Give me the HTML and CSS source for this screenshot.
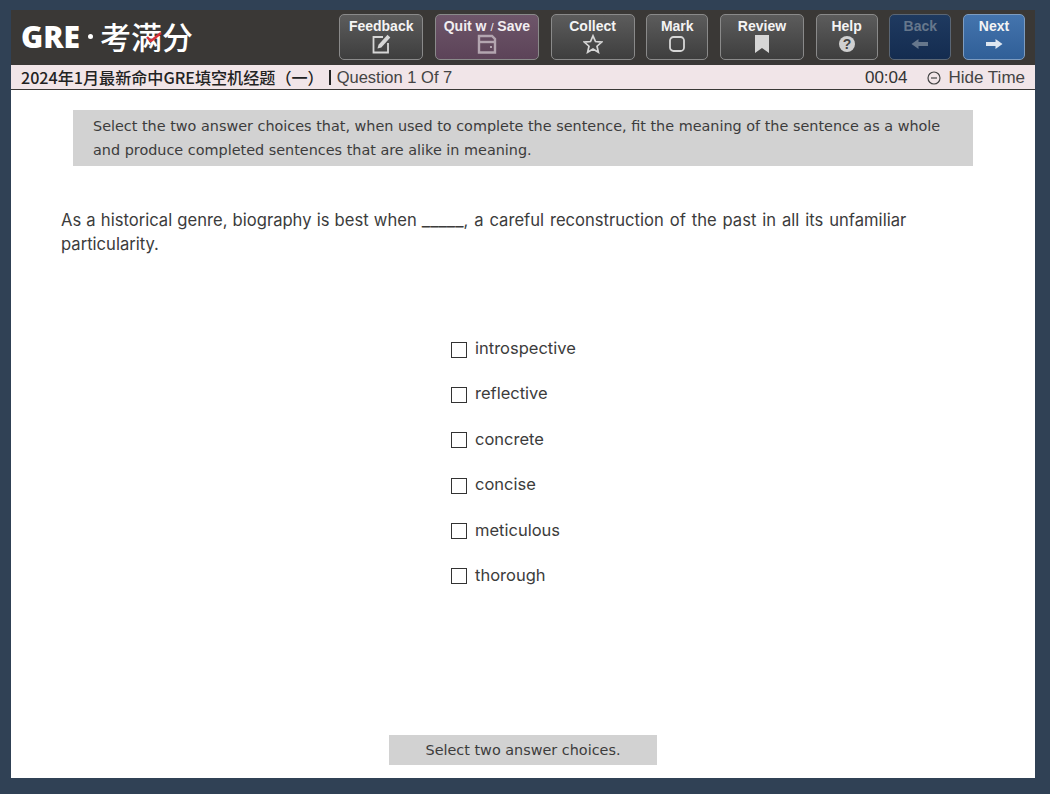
FILE: index.html
```html
<!DOCTYPE html>
<html lang="en">

<head>
  <meta charset="UTF-8">
  <meta name="viewport" content="width=device-width, initial-scale=1.0">
  <title>GRE Question</title>
  <link rel="stylesheet" href="styles.css">
</head>

<body>
  <div id="frame">
    <div id="topbar">
      <div id="logo">
        <span class="logo-gre">GRE</span>
        <span class="logo-dot"></span>
        <span class="logo-cn">考满分<svg class="logo-check" viewBox="0 0 16 10" width="16" height="10"><path d="M1 5l4 4 10-8" fill="none" stroke="#d8303a" stroke-width="2.4"/></svg></span>
      </div>
      <div id="buttons">
        <div class="tool-btn">
          <span>Feedback</span>
          <svg viewBox="0 0 20 20" width="20" height="20"><path d="M12 3H2.500V18.500H17V9" fill="none" stroke="#d6d6d6" stroke-width="1.800"/><path d="M6.500 14.500l1-3.800L16.500.8l2.800 2.800-9 9.900z" fill="#d6d6d6"/></svg>
        </div>
        <div class="tool-btn wide quit">
          <span>Quit w <small>/</small> Save</span>
          <svg viewBox="0 0 20 20" width="20" height="20"><path d="M2 2h13l3 3v13.500H2z" fill="none" stroke="#b3a5b0" stroke-width="2.400"/><path d="M2 8h16" stroke="#b3a5b0" stroke-width="2.400"/><rect x="13" y="12" width="2" height="2" fill="#b3a5b0"/></svg>
        </div>
        <div class="tool-btn">
          <span>Collect</span>
          <svg viewBox="0 0 20 20" width="20" height="20"><path d="M10 1.800l2.500 5.700 6.200.6-4.700 4.100 1.400 6.100-5.400-3.200-5.400 3.200 1.400-6.100L1.300 8.100l6.200-.6z" fill="none" stroke="#d6d6d6" stroke-width="1.700"/></svg>
        </div>
        <div class="tool-btn narrow">
          <span>Mark</span>
          <svg viewBox="0 0 20 20" width="20" height="20"><rect x="3" y="3" width="14" height="14" rx="3.500" fill="none" stroke="#d6d6d6" stroke-width="1.800"/></svg>
        </div>
        <div class="tool-btn">
          <span>Review</span>
          <svg viewBox="0 0 20 20" width="20" height="20"><path d="M3 1h14v18l-7-5-7 5z" fill="#d6d6d6"/></svg>
        </div>
        <div class="tool-btn narrow">
          <span>Help</span>
          <svg viewBox="0 0 20 20" width="20" height="20"><circle cx="10" cy="10" r="8" fill="#d0d0d0"/><text x="10" y="14.500" class="help-mark">?</text></svg>
        </div>
        <div class="tool-btn narrow back">
          <span>Back</span>
          <svg viewBox="0 0 20 20" width="20" height="20"><path d="M1.500 10l7-5v3H18v4H8.500v3z" fill="#66778c"/></svg>
        </div>
        <div class="tool-btn narrow next">
          <span>Next</span>
          <svg viewBox="0 0 20 20" width="20" height="20"><path d="M18.500 10l-7-5v3H2v4h9.500v3z" fill="#dde6f0"/></svg>
        </div>
      </div>
    </div>

    <div id="subbar">
      <div class="sub-title"><b>2024年1月最新命中GRE填空机经题（一）</b><i class="sep"></i><span>Question 1 Of 7</span></div>
      <div class="sub-time">
        <span class="clock">00:04</span>
        <span class="hide-time"><svg viewBox="0 0 14 14" width="14" height="14"><circle cx="7" cy="7" r="6" fill="none" stroke="#444" stroke-width="1.200"/><path d="M4 7h6" stroke="#444" stroke-width="1.200"/></svg>Hide Time</span>
      </div>
    </div>

    <div id="content">
      <div class="directions">Select the two answer choices that, when used to complete the sentence, fit the meaning of the sentence as a whole and produce completed sentences that are alike in meaning.</div>
      <p class="question">As a historical genre, biography is best when <span class="blank">_____</span><span class="rest">, a careful reconstruction of the past in all its unfamiliar</span><br>particularity.</p>
      <div class="choices">
        <label><i class="box"></i>introspective</label>
        <label><i class="box"></i>reflective</label>
        <label><i class="box"></i>concrete</label>
        <label><i class="box"></i>concise</label>
        <label><i class="box"></i>meticulous</label>
        <label><i class="box"></i>thorough</label>
      </div>
      <div class="status">Select two answer choices.</div>
    </div>
  </div>
</body>

</html>
```

FILE: styles.css
```css
html, body {
  margin: 0;
  height: 100%;
}
body {
  background-color: #304155;
  font-family: "Liberation Sans", "Noto Sans CJK SC", sans-serif;
  overflow: hidden;
}
#frame {
  width: 1024px;
  height: 768px;
  margin: 10px 0 0 11px;
  display: flex;
  flex-direction: column;
  background-color: white;
}
#topbar {
  height: 55px;
  flex-shrink: 0;
  display: flex;
  justify-content: space-between;
  background-color: #3a3836;
}
#logo {
  display: flex;
  align-items: center;
  padding-left: 10px;
  color: white;
  height: 52px;
}
.logo-gre {
  font-family: "Open Sans", sans-serif;
  font-weight: 800;
  font-size: 30px;
}
.logo-dot {
  width: 5px;
  height: 5px;
  border-radius: 50%;
  background-color: white;
  margin: 0 7px 0 8px;
}
.logo-cn {
  position: relative;
  font-family: "Noto Sans CJK SC", sans-serif;
  font-weight: 500;
  font-size: 31px;
  line-height: 36px;
}
.logo-check {
  position: absolute;
  left: 46px;
  top: 14px;
}
#buttons {
  display: flex;
  gap: 11.7px;
  padding: 4px 10px 0 0;
}
.tool-btn {
  box-sizing: border-box;
  width: 84px;
  height: 46px;
  border: 1px solid #8a8a8a;
  border-radius: 5px;
  display: flex;
  flex-direction: column;
  align-items: center;
  background: linear-gradient(#5c5c5c, #3e3e3e);
  color: #f4f4f4;
  font-weight: 700;
  font-size: 14px;
  line-height: 15px;
  padding-top: 4px;
}
.tool-btn span {
  height: 16px;
}
.tool-btn svg {
  margin-top: -1px;
}
.tool-btn small {
  font-size: 11px;
  font-weight: 400;
}
.tool-btn.narrow {
  width: 62px;
}
.tool-btn.wide {
  width: 104px;
}
.tool-btn.quit {
  background: linear-gradient(#6e566a, #5c4358);
  color: #f2eef1;
}
.tool-btn.back {
  background: linear-gradient(#1f3a60, #142c50);
  color: #66778c;
  border-color: #5a6675;
}
.tool-btn.next {
  background: linear-gradient(#4474ad, #305f97);
  border-color: #7d9cc0;
}
.help-mark {
  font-size: 14px;
  font-weight: 700;
  fill: #444;
  text-anchor: middle;
}
#subbar {
  box-sizing: border-box;
  height: 25px;
  flex-shrink: 0;
  display: flex;
  justify-content: space-between;
  align-items: center;
  padding: 0 10px;
  background-color: #f1e5e8;
  border-bottom: 1px solid #3a3836;
  font-size: 16.500px;
  line-height: 24px;
  color: #444;
}
.sub-title {
  display: flex;
  align-items: center;
}
.sub-title b {
  font-family: "Noto Sans CJK SC", sans-serif;
  font-weight: 500;
  color: #222;
  font-size: 16.100px;
}
.sep {
  width: 2px;
  height: 15px;
  background-color: #222;
  margin: 0 6px 0 5px;
}
.sub-time {
  display: flex;
  align-items: center;
  font-size: 17px;
  margin-top: 1px;
}
.clock {
  color: #333;
  margin-right: 20px;
}
.hide-time {
  display: flex;
  align-items: center;
  gap: 7px;
}
#content {
  flex-grow: 1;
  display: flex;
  flex-direction: column;
  color: #3c3c3c;
}
.directions {
  box-sizing: border-box;
  width: 900px;
  height: 56px;
  margin: 20px 0 0 62px;
  padding: 4px 20px;
  background-color: #d2d2d2;
  font-family: "DejaVu Sans", sans-serif;
  font-size: 14.400px;
  line-height: 24px;
}
.question {
  width: 870px;
  margin: 42px 0 0 50px;
  font-family: "Inter", sans-serif;
  font-size: 16.600px;
  word-spacing: 0.5px;
  line-height: 24px;
}
.blank {
  font-size: 18.300px;
  line-height: 0;
}
.rest {
  word-spacing: 1.250px;
}
.choices {
  display: flex;
  flex-direction: column;
  gap: 22.400px;
  margin: 81px 0 0 440px;
  font-family: "Inter", sans-serif;
  font-size: 16.500px;
  line-height: 23px;
}
.choices label {
  display: flex;
  align-items: center;
}
.box {
  box-sizing: border-box;
  width: 16px;
  height: 16px;
  border: 1px solid #333;
  margin: 2px 8px 0 0;
}
.status {
  box-sizing: border-box;
  width: 268px;
  height: 30px;
  margin: auto 0 13px 378px;
  background-color: #d2d2d2;
  font-family: "DejaVu Sans", sans-serif;
  font-size: 14.400px;
  line-height: 30px;
  text-align: center;
}
```
